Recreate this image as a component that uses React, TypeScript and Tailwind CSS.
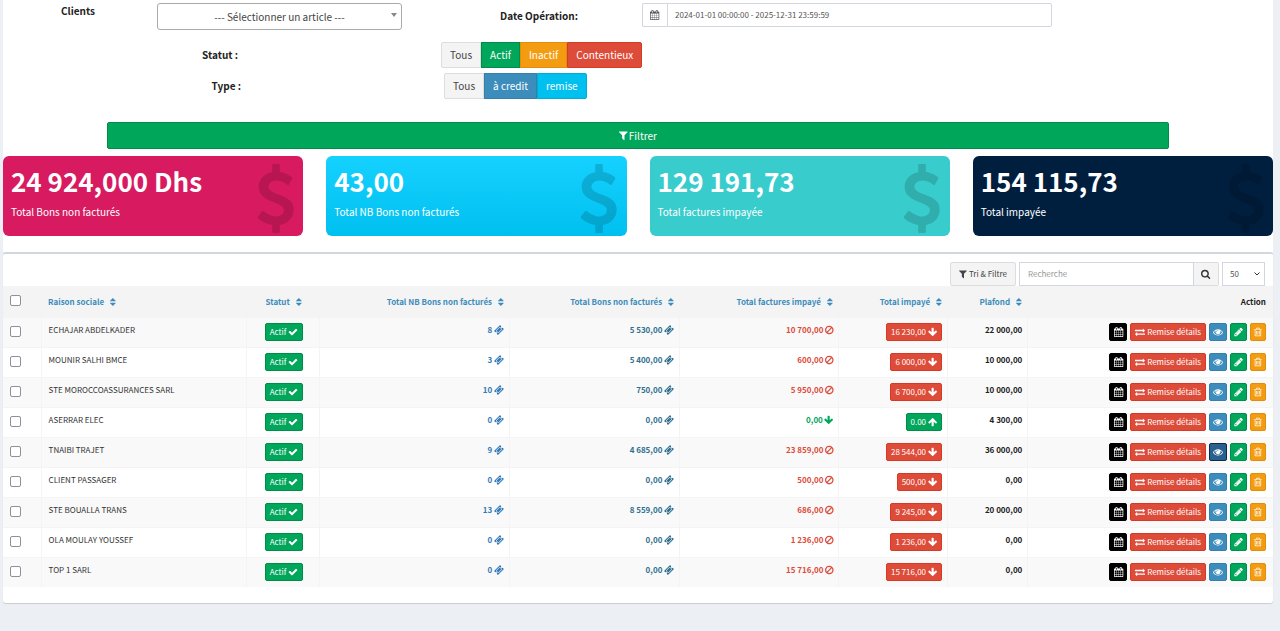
import { useState } from "react";
import clsx from "clsx";

// each icon: advance width on the 1792 grid, then its outline
const icons = {
    calendar: [1664, "M192 1664h288v-288h-288v288zm352 0h320v-288h-320v288zm-352-352h288v-320h-288v320zm352 0h320v-320h-320v320zm-352-384h288v-288h-288v288zm736 736h320v-288h-320v288zm-384-736h320v-288h-320v288zm768 736h288v-288h-288v288zm-384-352h320v-320h-320v320zm-352-864v-288q0-13-9.5-22.5t-22.5-9.5h-64q-13 0-22.5 9.5t-9.5 22.5v288q0 13 9.5 22.5t22.5 9.5h64q13 0 22.5-9.5t9.5-22.5zm736 864h288v-320h-288v320zm-384-384h320v-288h-320v288zm384 0h288v-288h-288v288zm32-480v-288q0-13-9.5-22.5t-22.5-9.5h-64q-13 0-22.5 9.5t-9.5 22.5v288q0 13 9.5 22.5t22.5 9.5h64q13 0 22.5-9.5t9.5-22.5zm384-64v1280q0 52-38 90t-90 38h-1408q-52 0-90-38t-38-90v-1280q0-52 38-90t90-38h128v-96q0-66 47-113t113-47h64q66 0 113 47t47 113v96h384v-96q0-66 47-113t113-47h64q66 0 113 47t47 113v96h128q52 0 90 38t38 90z"],
    filter: [1408, "M1595 295q17 41-14 70l-493 493v742q0 42-39 59-13 5-25 5-27 0-45-19l-256-256q-19-19-19-45v-486l-493-493q-31-29-14-70 17-39 59-39h1280q42 0 59 39z"],
    search: [1664, "M1216 832q0-185-131.5-316.5t-316.5-131.5-316.5 131.5-131.5 316.5 131.5 316.5 316.5 131.5 316.5-131.5 131.5-316.5zm512 832q0 52-38 90t-90 38q-54 0-90-38l-343-342q-179 124-399 124-143 0-273.5-55.5t-225-150-150-225-55.5-273.5 55.5-273.5 150-225 225-150 273.5-55.5 273.5 55.5 225 150 150 225 55.5 273.5q0 220-124 399l343 343q37 37 37 90z"],
    sort: [1024, "M1408 1088q0 26-19 45l-448 448q-19 19-45 19t-45-19l-448-448q-19-19-19-45t19-45 45-19h896q26 0 45 19t19 45zm0-384q0 26-19 45t-45 19h-896q-26 0-45-19t-19-45 19-45l448-448q19-19 45-19t45 19l448 448q19 19 19 45z"],
    check: [1792, "M1671 566q0 40-28 68l-724 724-136 136q-28 28-68 28t-68-28l-136-136-362-362q-28-28-28-68t28-68l136-136q28-28 68-28t68 28l294 295 656-657q28-28 68-28t68 28l136 136q28 28 28 68z"],
    down: [1664, "M1675 832q0 53-37 90l-651 652q-39 37-91 37-53 0-90-37l-651-652q-38-36-38-90 0-53 38-91l74-75q39-37 91-37 53 0 90 37l294 294v-704q0-52 38-90t90-38h128q52 0 90 38t38 90v704l294-294q37-37 90-37 52 0 91 37l75 75q37 39 37 91z"],
    up: [1664, "M1675 971q0 51-37 90l-75 75q-38 38-91 38-54 0-90-38l-294-293v704q0 52-37.5 84.5t-90.5 32.5h-128q-53 0-90.5-32.5t-37.5-84.5v-704l-294 293q-36 38-90 38t-90-38l-75-75q-38-38-38-90 0-53 38-91l651-651q35-37 90-37 54 0 91 37l651 651q37 39 37 91z"],
    ban: [1536, "M1440 893q0-161-87-295l-754 753q137 89 297 89 111 0 211.5-43.5t173.5-116.5 116-174.5 43-212.5zm-999 299l755-754q-135-91-300-91-148 0-273 73t-198 199-73 274q0 162 89 299zm1223-299q0 157-61 300t-163.5 246-245 164-298.5 61-298.5-61-245-164-163.5-246-61-300 61-299.5 163.5-245.5 245-164 298.5-61 298.5 61 245 164 163.5 245.5 61 299.5z"],
    ticket: [1792, "M1024 452l316 316-572 572-316-316zm-211 979l618-618q19-19 19-45t-19-45l-362-362q-18-18-45-18t-45 18l-618 618q-19 19-19 45t19 45l362 362q18 18 45 18t45-18zm889-637l-907 908q-37 37-90.5 37t-90.5-37l-126-125q56-56 56-136t-56-136-136-56-136 56l-125-126q-37-37-37-90.5t37-90.5l907-906q37-37 90.5-37t90.5 37l125 125q-56 56-56 136t56 136 136 56 136-56l126 125q37 37 37 90.5t-37 90.5z"],
    exchange: [1792, "M1792 1184v192q0 13-9.5 22.5t-22.5 9.5h-1376v192q0 13-9.5 22.5t-22.5 9.5q-12 0-24-10l-319-320q-9-9-9-22 0-14 9-23l320-320q9-9 23-9 13 0 22.5 9.5t9.5 22.5v192h1376q13 0 22.5 9.5t9.5 22.5zm0-544q0 14-9 23l-320 320q-9 9-23 9-13 0-22.5-9.5t-9.5-22.5v-192h-1376q-13 0-22.5-9.5t-9.5-22.5v-192q0-13 9.5-22.5t22.5-9.5h1376v-192q0-14 9-23t23-9q12 0 24 10l319 319q9 9 9 23z"],
    eye: [1792, "M1664 960q-152-236-381-353 61 104 61 225 0 185-131.5 316.5t-316.5 131.5-316.5-131.5-131.5-316.5q0-121 61-225-229 117-381 353 133 205 333.5 326.5t434.5 121.5 434.5-121.5 333.5-326.5zm-720-384q0-20-14-34t-34-14q-125 0-214.5 89.5t-89.5 214.5q0 20 14 34t34 14 34-14 14-34q0-86 61-147t147-61q20 0 34-14t14-34zm848 384q0 34-20 69-140 230-376.5 368.5t-499.5 138.5-499.5-139-376.5-368q-20-35-20-69t20-69q140-229 376.5-368t499.5-139 499.5 139 376.5 368q20 35 20 69z"],
    pencil: [1664, "M491 1536l91-91-235-235-91 91v107h128v128h107zm523-928q0-22-22-22-10 0-17 7l-542 542q-7 7-7 17 0 22 22 22 10 0 17-7l542-542q7-7 7-17zm-54-192l416 416-832 832h-416v-416zm683 96q0 53-37 90l-166 166-416-416 166-165q36-38 90-38 53 0 91 38l235 234q37 39 37 91z"],
    trash: [1408, "M704 736v576q0 14-9 23t-23 9h-64q-14 0-23-9t-9-23v-576q0-14 9-23t23-9h64q14 0 23 9t9 23zm256 0v576q0 14-9 23t-23 9h-64q-14 0-23-9t-9-23v-576q0-14 9-23t23-9h64q14 0 23 9t9 23zm256 0v576q0 14-9 23t-23 9h-64q-14 0-23-9t-9-23v-576q0-14 9-23t23-9h64q14 0 23 9t9 23zm128 724v-948h-896v948q0 22 7 40.5t14.5 27 10.5 8.5h832q3 0 10.5-8.5t14.5-27 7-40.5zm-672-1076h448l-48-117q-7-9-17-11h-317q-10 2-17 11zm928 32v64q0 14-9 23t-23 9h-96v948q0 83-47 143.5t-113 60.5h-832q-66 0-113-58.5t-47-141.5v-952h-96q-14 0-23-9t-9-23v-64q0-14 9-23t23-9h309l70-167q15-37 54-63t79-26h320q40 0 79 26t54 63l70 167h309q14 0 23 9t9 23z"],
    dollar: [1024, "M1362 1185q0 153-99.5 263.5t-258.5 136.5v175q0 14-9 23t-23 9h-135q-13 0-22.5-9.5t-9.5-22.5v-175q-66-9-127.5-31t-101.5-44.5-74-48-46.5-37.5-17.5-18q-17-21-2-41l103-135q7-10 23-12 15-2 24 9l2 2q113 99 243 125 37 8 74 8 81 0 142.5-43t61.5-122q0-28-15-53t-33.5-42-58.5-37.5-66-32-80-32.5q-39-16-61.5-25t-61.5-26.5-62.5-31-56.5-35.5-53.5-42.5-43.5-49-35.5-58-21-66.5-8.5-78q0-138 98-242t255-134v-180q0-13 9.5-22.5t22.5-9.5h135q14 0 23 9t9 23v176q57 6 110.5 23t87 33.5 63.5 37.5 39 29 15 14q17 18 5 38l-81 146q-8 15-23 16-14 3-27-7-3-3-14.5-12t-39-26.5-58.5-32-74.5-26-85.5-11.5q-95 0-155 43t-60 111q0 26 8.5 48t29.5 41.5 39.5 33 56 31 60.5 27 70 27.5q53 20 81 31.5t76 35 75.5 42.5 62 50 53 63.5 31.5 76.5 13 94z"],
} as const;

const Icon = ({ name, className = "h-[10px]" }: { name: keyof typeof icons, className?: string }) => {
    const [width, d] = icons[name];
    return (
        <svg viewBox={ `${(1792 - width) / 2} 0 ${width} 1792` } fill="currentColor" aria-hidden="true" className={ clsx("w-auto shrink-0 overflow-visible", className) }>
            <path d={ d } />
        </svg>
    );
}

const cards = [
    { value: "24 924,000 Dhs", label: "Total Bons non facturés", color: "bg-[#d81b60]" },
    { value: "43,00", label: "Total NB Bons non facturés", color: "bg-linear-to-t from-[#00c0ef] to-[#14d1ff]" },
    { value: "129 191,73", label: "Total factures impayée", color: "bg-[#39cccc]" },
    { value: "154 115,73", label: "Total impayée", color: "bg-[#001f3f]" },
];

const columns = [
    { title: "Raison sociale", align: "justify-start" },
    { title: "Statut", align: "justify-center" },
    { title: "Total NB Bons non facturés", align: "justify-end" },
    { title: "Total Bons non facturés", align: "justify-end" },
    { title: "Total factures impayé", align: "justify-end" },
    { title: "Total impayé", align: "justify-end" },
    { title: "Plafond", align: "justify-end" },
];

const rows = [
    { name: "ECHAJAR ABDELKADER", nb: "8", bons: "5 530,00", factures: "10 700,00", total: "16 230,00", plafond: "22 000,00" },
    { name: "MOUNIR SALHI BMCE", nb: "3", bons: "5 400,00", factures: "600,00", total: "6 000,00", plafond: "10 000,00" },
    { name: "STE MOROCCOASSURANCES SARL", nb: "10", bons: "750,00", factures: "5 950,00", total: "6 700,00", plafond: "10 000,00" },
    { name: "ASERRAR ELEC", nb: "0", bons: "0,00", factures: "0,00", total: "0.00", plafond: "4 300,00", paid: true },
    { name: "TNAIBI TRAJET", nb: "9", bons: "4 685,00", factures: "23 859,00", total: "28 544,00", plafond: "36 000,00", viewed: true },
    { name: "CLIENT PASSAGER", nb: "0", bons: "0,00", factures: "500,00", total: "500,00", plafond: "0,00" },
    { name: "STE BOUALLA TRANS", nb: "13", bons: "8 559,00", factures: "686,00", total: "9 245,00", plafond: "20 000,00" },
    { name: "OLA MOULAY YOUSSEF", nb: "0", bons: "0,00", factures: "1 236,00", total: "1 236,00", plafond: "0,00" },
    { name: "TOP 1 SARL", nb: "0", bons: "0,00", factures: "15 716,00", total: "15 716,00", plafond: "0,00" },
];

const smallBtn = "inline-flex h-[18px] items-center justify-center rounded-[2px] border text-[8px] leading-none text-white";
const groupBtn = "h-[26px] border px-2 text-[10px] first:rounded-l-[2px] last:rounded-r-[2px]";
const check = "block size-[11px] appearance-none rounded-[2px] border border-[#8f8f9d] bg-white checked:bg-[#0075ff]";
const cell = "border-t border-r border-[#f4f4f4] pr-[5px] pl-[7px] last:border-r-0 last:pr-[7px]";

const App = () => {
    const [selected, setSelected] = useState<string[]>([]);

    const toggle = (name: string) => {
        setSelected(selected.includes(name) ? selected.filter(el => el !== name) : [...selected, name]);
    }

    return (
        <div className="min-h-screen bg-[#ecf0f5] pr-[7px] pl-[3px] font-['Noto_Sans_CJK_JP','Source_Sans_Pro',sans-serif] text-[10px] leading-[14px] text-[#333]">
            <div className="bg-white">
                <div className="grid grid-cols-[154fr_245fr_34fr_206fr_410fr_221fr] pt-[3px]">
                    <label htmlFor="client" className="pt-px pr-1 text-center font-bold text-[#222]">Clients</label>
                    <div className="relative">
                        <select id="client" className="h-[27px] w-full appearance-none rounded-[3px] border border-[#aaa] bg-white px-5 text-[10px] text-[#444] [text-align-last:center]">
                            <option>--- Sélectionner un article ---</option>
                        </select>
                        <svg viewBox="0 0 6 4" fill="#888" aria-hidden="true" className="pointer-events-none absolute top-[10px] right-[5px] h-1 w-[6px]">
                            <path d="M0 0h6L3 4z" />
                        </svg>
                    </div>
                    <label htmlFor="date" className="col-start-4 pt-[6px] text-center font-bold text-[#222]">Date Opération:</label>
                    <div className="flex h-6">
                        <span className="flex w-[25px] items-center justify-center rounded-l-[2px] border border-r-0 border-[#d2d6de] text-[#555]">
                            <Icon name="calendar" />
                        </span>
                        <input id="date" type="text" defaultValue="2024-01-01 00:00:00 - 2025-12-31 23:59:59" className="min-w-0 flex-1 rounded-r-[2px] border border-[#d2d6de] px-[7px] text-[8px] text-[#555]" />
                    </div>
                </div>

                <div className="mt-3 grid grid-cols-[438fr_832fr] items-center">
                    <span id="statut" className="pr-[203px] text-right font-bold text-[#222]">Statut :</span>
                    <div role="group" aria-labelledby="statut" className="flex">
                        <button type="button" className={ clsx(groupBtn, "border-[#ddd] bg-[#f4f4f4] text-[#444]") }>Tous</button>
                        <button type="button" className={ clsx(groupBtn, "border-[#008d4c] bg-[#00a65a] text-white") }>Actif</button>
                        <button type="button" className={ clsx(groupBtn, "border-[#e08e0b] bg-[#f39c12] text-white") }>Inactif</button>
                        <button type="button" className={ clsx(groupBtn, "border-[#d73925] bg-[#dd4b39] text-white") }>Contentieux</button>
                    </div>
                </div>
                <div className="mt-[5px] grid grid-cols-[441fr_829fr] items-center">
                    <span id="type" className="pr-[203px] text-right font-bold text-[#222]">Type :</span>
                    <div role="group" aria-labelledby="type" className="flex">
                        <button type="button" className={ clsx(groupBtn, "border-[#ddd] bg-[#f4f4f4] text-[#444]") }>Tous</button>
                        <button type="button" className={ clsx(groupBtn, "border-[#367fa9] bg-[#3c8dbc] text-white") }>à credit</button>
                        <button type="button" className={ clsx(groupBtn, "border-[#00acd6] bg-[#00c0ef] text-white") }>remise</button>
                    </div>
                </div>

                <div className="mt-[23px] grid grid-cols-[104fr_1062fr_104fr]">
                    <button type="button" className="col-start-2 flex h-[27px] items-center justify-center gap-px rounded-[2px] border border-[#008d4c] bg-[#00a65a] text-[10px] text-white">
                        <Icon name="filter" className="h-[11px]" />
                        Filtrer
                    </button>
                </div>

                <div className="mt-[7px] grid grid-cols-4 gap-[23px] pb-4">
                    { cards.map((el) => (
                        <div key={ el.label } className={ clsx("flex h-[80px] justify-between overflow-hidden rounded-[6px] px-2 text-white", el.color) }>
                            <div className="pt-2">
                                <h3 className="text-[26px] leading-[34px] font-bold whitespace-nowrap">{ el.value }</h3>
                                <p className="mt-[6px] text-[10px] leading-4">{ el.label }</p>
                            </div>
                            <Icon name="dollar" className="mt-2 h-[69px] text-black/15" />
                        </div>
                    )) }
                </div>
            </div>

            <div className="rounded-[3px] border-t-2 border-[#d2d6de] bg-white pb-4 shadow-[0_1px_1px_rgba(0,0,0,0.15)]">
                <div className="flex justify-end gap-[3px] pt-2 pr-2">
                    <button type="button" className="flex h-6 items-center gap-[2px] rounded-[2px] border border-[#ddd] bg-[#f4f4f4] px-2 text-[8px] text-[#444]">
                        <Icon name="filter" />
                        Tri &amp; Filtre
                    </button>
                    <div className="flex h-6 w-[200px]">
                        <input type="search" aria-label="Recherche" placeholder="Recherche" className="min-w-0 flex-1 border border-[#d2d6de] px-2 text-[8px] placeholder:text-[#999]" />
                        <button type="button" aria-label="Rechercher" className="flex w-[25px] items-center justify-center rounded-r-[2px] border border-l-0 border-[#ddd] bg-[#f4f4f4] text-[#333]">
                            <Icon name="search" />
                        </button>
                    </div>
                    <div className="relative">
                        <select aria-label="Lignes par page" className="h-6 w-[43px] appearance-none border border-[#d2d6de] bg-white px-[7px] text-[8px] text-[#555]">
                            <option>50</option>
                        </select>
                        <svg viewBox="0 0 6 4" fill="none" stroke="#333" aria-hidden="true" className="pointer-events-none absolute top-[10px] right-[5px] h-1 w-[6px]">
                            <path d="M0.5 0.5L3 3L5.5 0.5" />
                        </svg>
                    </div>
                </div>

                <table className="w-full table-fixed text-[8px] leading-3">
                    <colgroup>
                        <col className="w-[3%]" />
                        <col className="w-[16.2%]" />
                        <col className="w-[5.7%]" />
                        <col className="w-[15%]" />
                        <col className="w-[13.4%]" />
                        <col className="w-[12.5%]" />
                        <col className="w-[8.6%]" />
                        <col className="w-[6.3%]" />
                        <col />
                    </colgroup>
                    <thead className="bg-[#f4f4f4]">
                        <tr className="h-[31px]">
                            <th className="px-[7px] pb-[2px]">
                                <input type="checkbox" aria-label="Tout sélectionner" className={ check } checked={ selected.length === rows.length } onChange={ () => setSelected(selected.length === rows.length ? [] : rows.map(el => el.name)) } />
                            </th>
                            { columns.map((el) => (
                                <th key={ el.title } className="pt-[2px] pr-[6px] pl-[7px]">
                                    <a href="#" className={ clsx("flex items-center gap-[6px] whitespace-nowrap text-[#3c8dbc]", el.align) }>
                                        { el.title }
                                        <Icon name="sort" />
                                    </a>
                                </th>
                            )) }
                            <th className="px-[7px] pt-[2px] text-right text-[#222]">Action</th>
                        </tr>
                    </thead>
                    <tbody>
                        { rows.map((el) => (
                            <tr key={ el.name } className="h-[30px] odd:bg-[#f9f9f9]">
                                <td className={ clsx(cell, "pb-px") }>
                                    <input type="checkbox" aria-label={ el.name } className={ check } checked={ selected.includes(el.name) } onChange={ () => toggle(el.name) } />
                                </td>
                                <td className={ clsx(cell, "pb-1") }>{ el.name }</td>
                                <td className={ clsx(cell, "pb-px") }>
                                    <div className="flex justify-center">
                                        <span className={ clsx(smallBtn, "gap-[2px] border-[#008d4c] bg-[#00a65a] px-1") }>Actif <Icon name="check" /></span>
                                    </div>
                                </td>
                                <td className={ clsx(cell, "pb-1 font-bold text-[#337ab7]") }>
                                    <div className="flex items-center justify-end gap-[2px]">{ el.nb } <Icon name="ticket" /></div>
                                </td>
                                <td className={ clsx(cell, "pb-1 font-bold text-[#31708f]") }>
                                    <div className="flex items-center justify-end gap-[2px]">{ el.bons } <Icon name="ticket" /></div>
                                </td>
                                <td className={ clsx(cell, "pb-1 font-bold", el.paid ? "text-[#00a65a]" : "text-[#dd4b39]") }>
                                    <div className="flex items-center justify-end gap-px">{ el.factures }<Icon name={ el.paid ? "down" : "ban" } /></div>
                                </td>
                                <td className={ clsx(cell, "pb-px") }>
                                    <div className="flex justify-end">
                                        <span className={ clsx(smallBtn, "gap-[2px] px-1", el.paid ? "border-[#008d4c] bg-[#00a65a]" : "border-[#d73925] bg-[#dd4b39]") }>
                                            { el.total } <Icon name={ el.paid ? "up" : "down" } />
                                        </span>
                                    </div>
                                </td>
                                <td className={ clsx(cell, "pb-1 text-right font-bold text-[#222]") }>{ el.plafond }</td>
                                <td className={ clsx(cell, "pb-px") }>
                                    <div className="flex justify-end gap-[3px]">
                                        <button type="button" aria-label="Calendrier" className={ clsx(smallBtn, "w-[18px] border-black bg-black") }><Icon name="calendar" /></button>
                                        <button type="button" className={ clsx(smallBtn, "gap-[2px] border-[#d73925] bg-[#dd4b39] px-1 whitespace-nowrap") }><Icon name="exchange" />Remise détails</button>
                                        <button type="button" aria-label="Voir" className={ clsx(smallBtn, "w-[18px]", el.viewed ? "border-[#122b40] bg-[#286090]" : "border-[#367fa9] bg-[#3c8dbc]") }><Icon name="eye" /></button>
                                        <button type="button" aria-label="Modifier" className={ clsx(smallBtn, "w-[17px] border-[#008d4c] bg-[#00a65a]") }><Icon name="pencil" /></button>
                                        <button type="button" aria-label="Supprimer" className={ clsx(smallBtn, "w-4 border-[#e08e0b] bg-[#f39c12]") }><Icon name="trash" /></button>
                                    </div>
                                </td>
                            </tr>
                        )) }
                    </tbody>
                </table>
            </div>
        </div>
    );
}
export default App;
